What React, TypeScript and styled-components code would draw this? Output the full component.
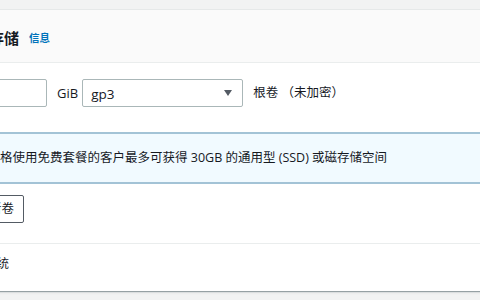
import styled, { createGlobalStyle } from "styled-components"

const Global = createGlobalStyle`
    html, body {
        margin: 0;
        background: #f2f3f3;
        overflow: hidden;
    }
    body {
        font-family: "Open Sans", "Noto Sans CJK SC", sans-serif;
        color: #16191f;
    }
`

export default function App() {
    return <Page>
        <Global />
        <Card>
            <Header>
                <Title>配置存储</Title>
                <InfoLink>信息</InfoLink>
            </Header>

            <Body>
                <VolumeRow>
                    <SizeInput defaultValue="8" />
                    <Unit>GiB</Unit>
                    <Select>
                        <span>gp3</span>
                        <Caret />
                    </Select>
                    <Note>根卷 （未加密）</Note>
                </VolumeRow>

                <Alert>有资格使用免费套餐的客户最多可获得 30GB 的通用型 (SSD) 或磁存储空间</Alert>

                <Button>添加新卷</Button>
            </Body>

            <FileSystems>文件系统</FileSystems>
        </Card>
    </Page>
}

const Page = styled.div`
    width: 480px;
    height: 300px;
    padding-top: 9px;
    box-sizing: border-box;
`

const Card = styled.div`
    width: 640px;
    margin-left: -64px;
    background: #fff;
    border-top: 1px solid #e6e9e9;
    box-shadow: 0 1px 1px 0 rgba(0, 28, 36, 0.35), 0 3px 3px -1px rgba(0, 28, 36, 0.06);
`

const Header = styled.div`
    height: 53px;
    box-sizing: border-box;
    padding: 3px 20px 0 23px;
    background: #fafafa;
    border-bottom: 1px solid #eaeded;

    display: flex;
    align-items: center;
    gap: 10px;
`

const Title = styled.h2`
    margin: 0;
    font-size: 15px;
    font-weight: 700;
    line-height: 20px;
`

const InfoLink = styled.a`
    color: #0073bb;
    font-size: 10.5px;
    font-weight: 700;
    line-height: 20px;
    margin-top: 1px;
`

const Body = styled.div`
    padding: 16px 20px 20px;
    border-bottom: 1px solid #eaeded;
`

const VolumeRow = styled.div`
    display: flex;
    align-items: center;
    height: 28px;
`

const SizeInput = styled.input`
    width: 91px;
    height: 28px;
    box-sizing: border-box;
    padding: 0 8px;
    border: 1px solid #aab7b8;
    border-radius: 2px;
    color: transparent;
    font-family: inherit;
    font-size: 13.5px;
`

const Unit = styled.span`
    margin-left: 10px;
    font-size: 13px;
    line-height: 20px;
`

const Select = styled.div`
    margin-left: 4px;
    width: 161px;
    height: 28px;
    box-sizing: border-box;
    padding: 0 10px 0 8px;
    border: 1px solid #aab7b8;
    border-radius: 2px;

    display: flex;
    align-items: center;
    justify-content: space-between;

    span {
        font-size: 13.5px;
        line-height: 20px;
        margin-top: 1px;
    }
`

const Caret = styled.i`
    width: 0;
    height: 0;
    border-left: 4.5px solid transparent;
    border-right: 4.5px solid transparent;
    border-top: 6px solid #545b64;
`

const Note = styled.span`
    margin-left: 10px;
    font-size: 12.5px;
    line-height: 20px;
    white-space: pre;
`

const Alert = styled.div`
    margin-top: 25px;
    height: 52px;
    box-sizing: border-box;
    padding: 0 15px 0 17px;
    background: #f1faff;
    border: 2px solid #a3c3d6;

    display: flex;
    align-items: center;
    font-size: 12.5px;
    line-height: 18px;
    white-space: nowrap;
`

const Button = styled.button`
    margin-top: 11px;
    margin-left: -1px;
    height: 28px;
    padding: 0 9px 0 8px;
    border: 1px solid #545b64;
    border-radius: 2px;
    background: #fff;
    color: #16191f;
    font-family: inherit;
    font-size: 12.5px;
    line-height: 18px;
`

const FileSystems = styled.div`
    height: 47px;
    box-sizing: border-box;
    padding: 11px 20px 0 23px;
    font-size: 12.5px;
    line-height: 17px;
`
